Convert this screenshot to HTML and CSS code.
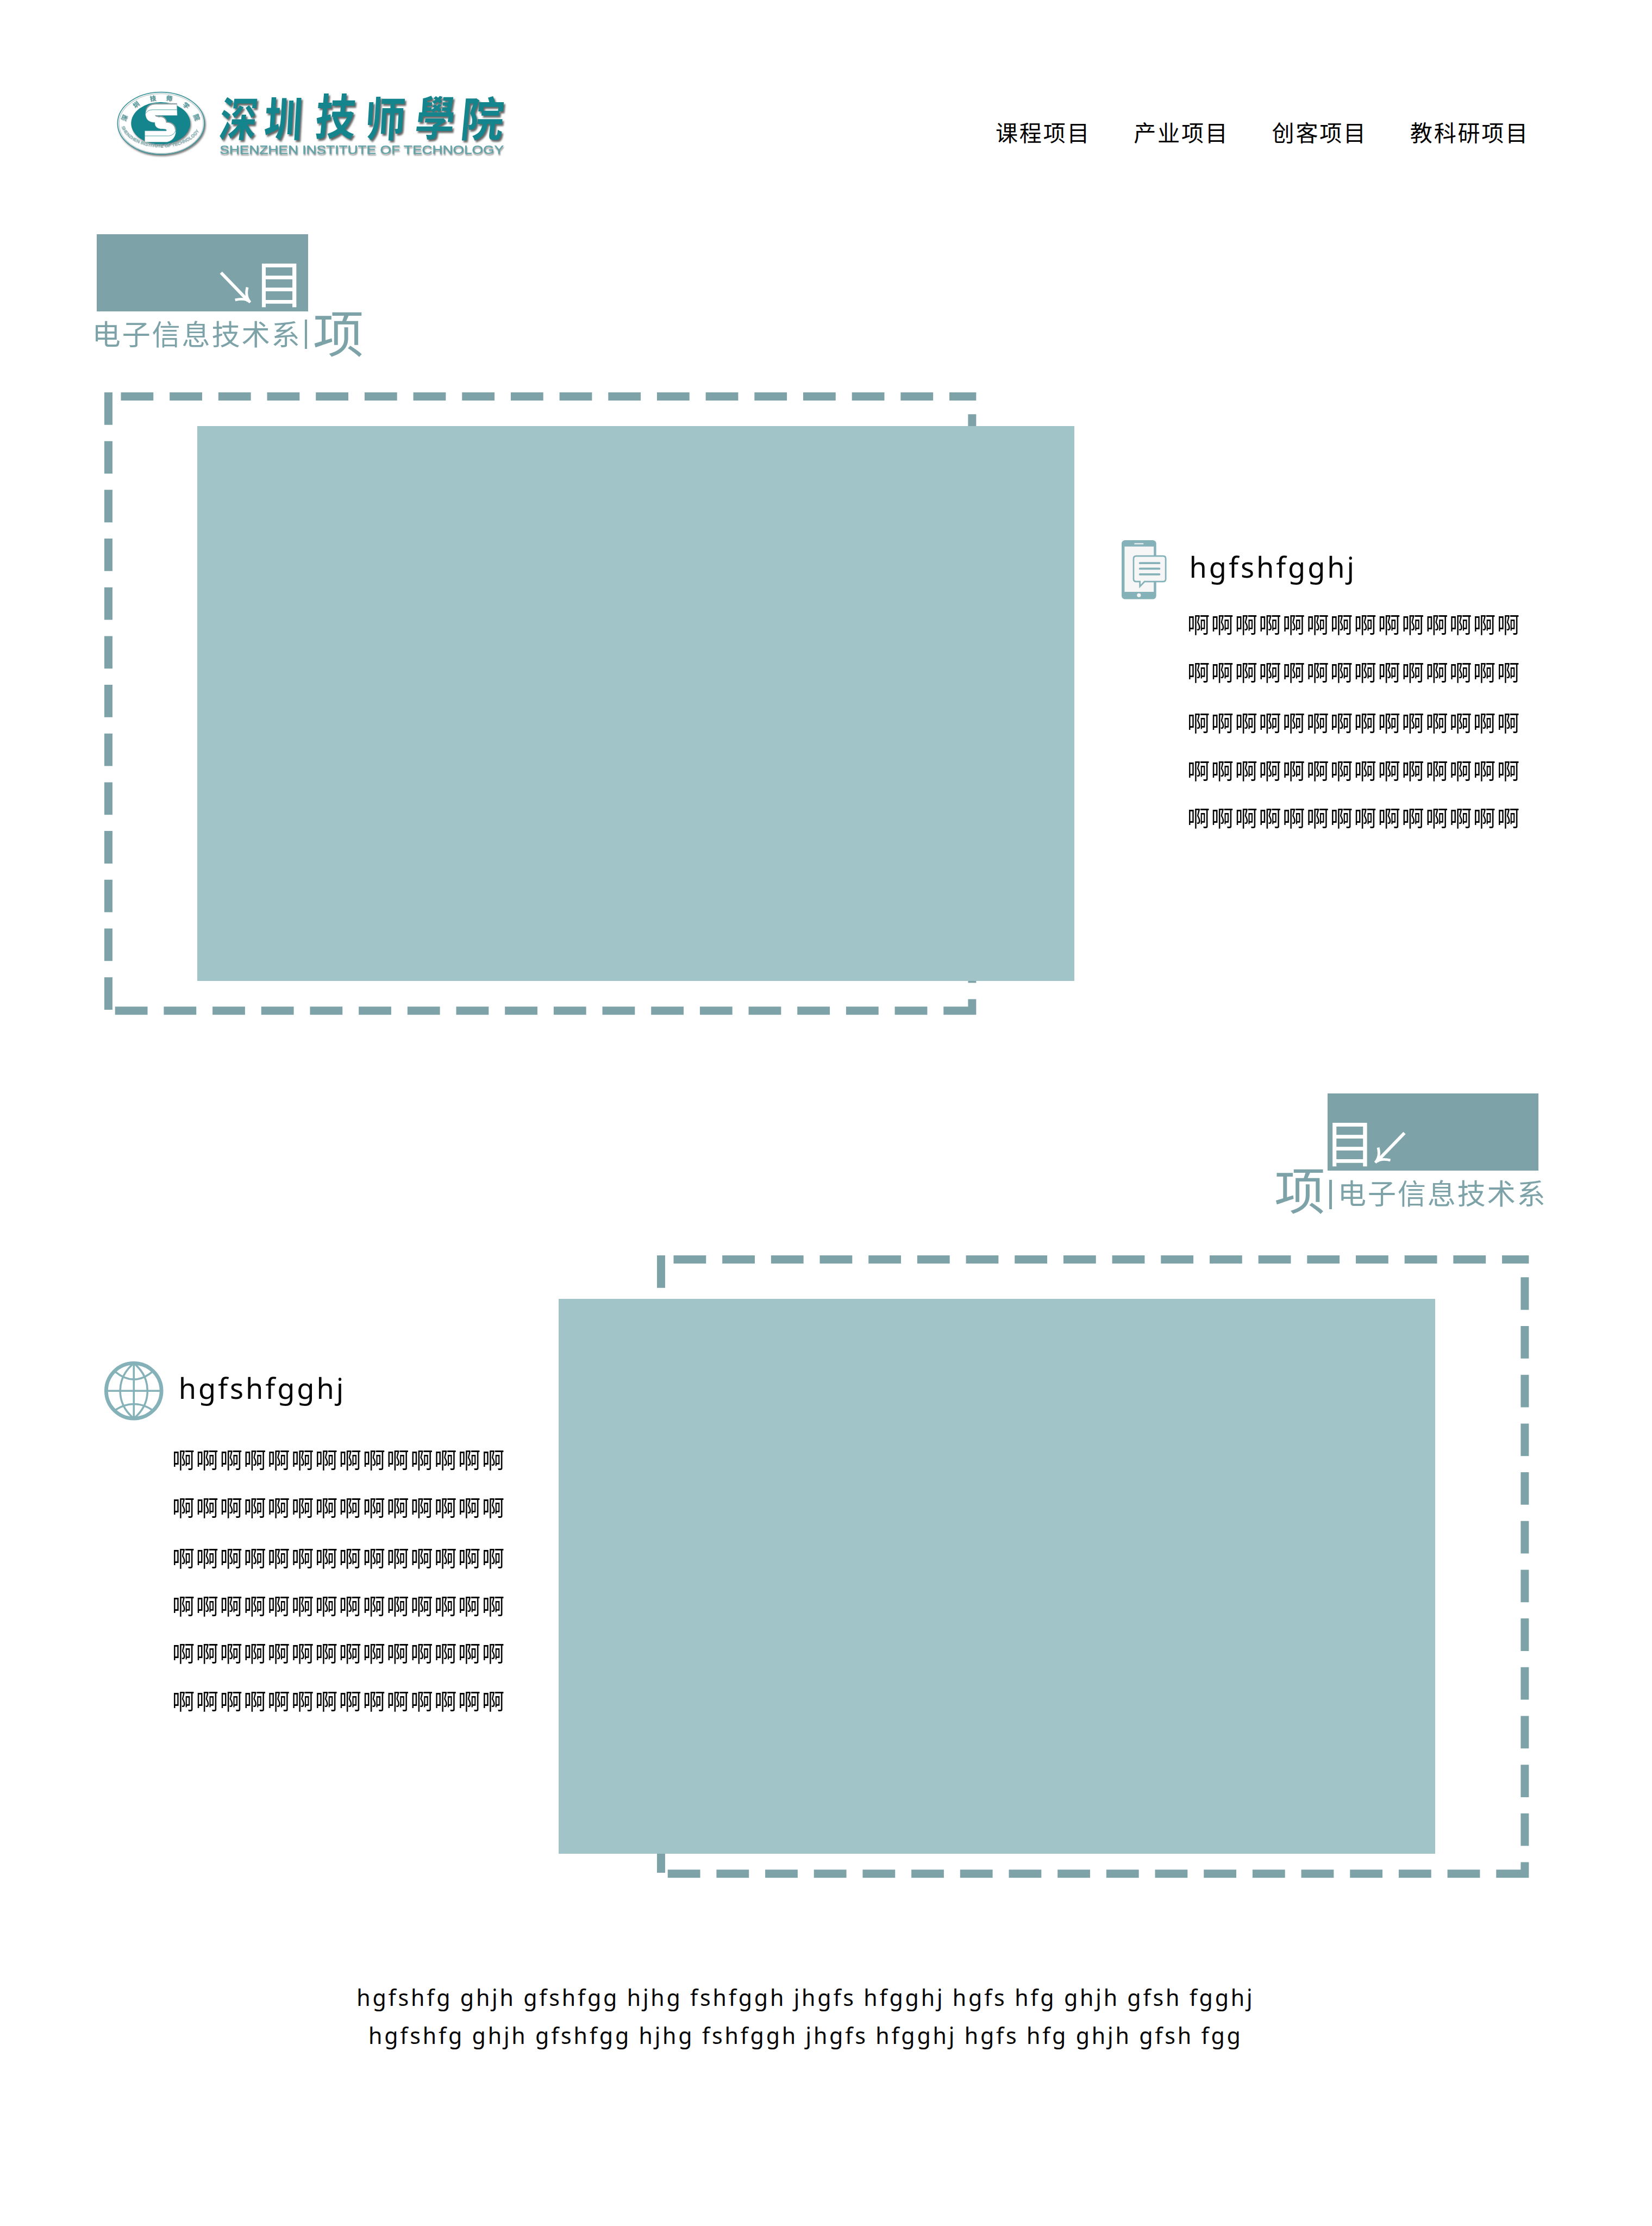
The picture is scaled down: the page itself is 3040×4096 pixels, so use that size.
FILE: index.html
```html
<!DOCTYPE html>
<html lang="zh-CN">
<head>
<meta charset="utf-8">
<title>深圳技师學院</title>
<link rel="stylesheet" href="styles.css">
</head>
<body>
<header class="top">
  <svg class="logo" viewBox="230 180 820 160">
    <g class="emblem" transform="translate(230 180) scale(.33333)">
      <g class="raised">
        <ellipse class="ring" cx="302" cy="220" rx="267" ry="191"/>
        <ellipse class="groove" cx="303" cy="222" rx="259" ry="184"/>
      </g>
      <g class="raised">
        <ellipse class="disc" cx="300" cy="220" rx="182" ry="130"/>
      </g>
      <path class="mark" d="M400 98H262C218 104 203 145 207 172C212 203 235 215 264 215C262 236 275 252 300 255C326 256 340 256 334 267H202V336H340C382 326 396 290 393 262C388 226 362 214 336 213C334 190 312 174 290 180L266 172H402Z"/>
      <path class="mark-shade" d="M210 140C218 112 240 102 268 101H398M392 262C388 226 362 214 336 213C334 190 312 174 290 180L268 174"/>
      <path class="mark-line" d="M207 160Q222 137 250 137H402M202 298H350Q384 294 393 262"/>
      <g class="ring-cn">
        <text transform="translate(75 185) rotate(-68)">深</text>
        <text transform="translate(147 102) rotate(-38)">圳</text>
        <text transform="translate(252 64) rotate(-10)">技</text>
        <text transform="translate(353 64) rotate(10)">师</text>
        <text transform="translate(458 108) rotate(38)">学</text>
        <text transform="translate(522 182) rotate(68)">院</text>
      </g>
      <path id="arc" fill="none" d="M58 240A248 154 0 0 0 545 246"/>
      <text class="ring-en"><textPath href="#arc" textLength="560" lengthAdjust="spacingAndGlyphs">SHENZHEN INSTITUTE OF TECHNOLOGY</textPath></text>
    </g>
    <g class="brush">
      <text transform="translate(486 280) scale(.8 1) skewX(-8)">深</text>
      <text transform="translate(580 280) scale(.82 1) skewX(-4)">圳</text>
      <text transform="translate(686 277) scale(.86 1.04) skewX(-6)">技</text>
      <text transform="translate(789 280) scale(.86 1) skewX(-4)">师</text>
      <text transform="translate(890 278) scale(.84 1) skewX(-8)">學</text>
      <text transform="translate(987 280) scale(.92 1) skewX(-6)">院</text>
    </g>
    <text class="latin" x="451" y="316" textLength="583" lengthAdjust="spacingAndGlyphs">SHENZHEN INSTITUTE OF TECHNOLOGY</text>
  </svg>
  <nav class="nav">
    <a>课程项目</a><a>产业项目</a><a>创客项目</a><a>教科研项目</a>
  </nav>
</header>

<section class="project">
  <div class="heading">
    <div class="plate">
      <svg class="arrow" viewBox="0 0 66 64"><path d="M3 3L59 61"/><path class="tip" d="M57 33Q52 52 63 64Q54 54 32 59"/></svg>
      <span class="big">目</span>
    </div>
    <div class="caption"><span class="dept">电子信息技术系</span><i class="bar"></i><span class="big">项</span></div>
  </div>
  <div class="row">
    <div class="stage">
      <svg class="dashes" viewBox="0 0 1789 1277">
        <path d="M34 8.33H1789M8.33 0V1277M1780.67 45V1277M22 1268.67H1789"/>
      </svg>
      <div class="picture"></div>
    </div>
    <div class="note">
      <svg class="phone" viewBox="0 0 92 121">
        <rect class="fill" width="71" height="121" rx="7"/>
        <rect class="paper" x="6" y="13" width="60" height="93"/>
        <rect class="paper" x="26" y="6" width="19" height="2.4" rx="1"/>
        <ellipse class="paper" cx="35.500" cy="113" rx="4" ry="4"/>
        <path class="bubble" d="M30 32.500H85Q90.500 32.500 90.500 38V79.500Q90.500 85 85 85H47L37.500 95V85H30Q24.500 85 24.500 79.500V38Q24.500 32.500 30 32.500Z"/>
        <path class="lines" d="M37.500 47H77.500M37.500 58.500H77.500M37.500 70H77.500"/>
      </svg>
      <div class="copy">
        <h2>hgfshfgghj</h2>
        <p>啊啊啊啊啊啊啊啊啊啊啊啊啊啊</p>
        <p>啊啊啊啊啊啊啊啊啊啊啊啊啊啊</p>
        <p>啊啊啊啊啊啊啊啊啊啊啊啊啊啊</p>
        <p>啊啊啊啊啊啊啊啊啊啊啊啊啊啊</p>
        <p>啊啊啊啊啊啊啊啊啊啊啊啊啊啊</p>
      </div>
    </div>
  </div>
</section>

<section class="project mirrored">
  <div class="heading">
    <div class="plate">
      <span class="big">目</span>
      <svg class="arrow" viewBox="0 0 66 64"><g transform="translate(66 0) scale(-1 1)"><path d="M3 3L59 61"/><path class="tip" d="M57 33Q52 52 63 64Q54 54 32 59"/></g></svg>
    </div>
    <div class="caption"><span class="big">项</span><i class="bar"></i><span class="dept">电子信息技术系</span></div>
  </div>
  <div class="row">
    <div class="note">
      <svg class="globe" viewBox="0 0 121 121">
        <circle class="rim" cx="60.500" cy="60.500" r="56.700"/>
        <path d="M60.500 4V117M4 60.500H117M58 6C24 36 24 85 58 115M63 6C97 36 97 85 63 115M22 21Q60.500 53 99 21M22 100Q60.500 75 99 100"/>
      </svg>
      <div class="copy">
        <h2>hgfshfgghj</h2>
        <p>啊啊啊啊啊啊啊啊啊啊啊啊啊啊</p>
        <p>啊啊啊啊啊啊啊啊啊啊啊啊啊啊</p>
        <p>啊啊啊啊啊啊啊啊啊啊啊啊啊啊</p>
        <p>啊啊啊啊啊啊啊啊啊啊啊啊啊啊</p>
        <p>啊啊啊啊啊啊啊啊啊啊啊啊啊啊</p>
        <p>啊啊啊啊啊啊啊啊啊啊啊啊啊啊</p>
      </div>
    </div>
    <div class="stage">
      <svg class="dashes" viewBox="0 0 1789 1277">
        <path d="M34 8.33H1789M8.33 0V1277M1780.67 45V1277M22 1268.67H1789"/>
      </svg>
      <div class="picture"></div>
    </div>
  </div>
</section>

<footer class="foot">
  <p>hgfshfg ghjh gfshfgg hjhg fshfggh jhgfs hfgghj hgfs hfg ghjh gfsh fgghj</p>
  <p>hgfshfg ghjh gfshfgg hjhg fshfggh jhgfs hfgghj hgfs hfg ghjh gfsh fgg</p>
</footer>
</body>
</html>
```
FILE: styles.css
```css
/* 1rem is a hundred design pixels */
html { font-size: 89.68px; background: #fff; }
* { box-sizing: border-box; margin: 0; padding: 0; }
body {
  width: 3040px;
  height: 4096px;
  overflow: hidden;
  color: #050505;
  font-family: "Noto Sans CJK SC", "Noto Sans", sans-serif;
  font-weight: 400;
}
svg { display: block; flex: none; overflow: visible; }

.top {
  display: flex;
  justify-content: space-between;
  align-items: flex-start;
  height: 4.81rem;
  padding: 1.8rem 2.52rem 0 2.3rem;
}
.logo { width: 8.2rem; height: 1.6rem; }
.ring { fill: #fff; stroke: #3f979c; stroke-width: 6; }
.groove { fill: none; stroke: #b9c6c7; stroke-width: 4; }
.disc { fill: #14858d; }
.raised { filter: drop-shadow(6px 9px 5px rgba(0, 0, 0, .5)); }
.mark { fill: #fff; stroke: #5d9a9e; stroke-width: 2; }
.mark-shade { fill: none; stroke: #8f9d9e; stroke-width: 7; }
.mark-line { fill: none; stroke: #3f979c; stroke-width: 3; }
.ring-cn text {
  font-size: 38px;
  font-weight: 700;
  fill: #4f9a9f;
  text-anchor: middle;
  dominant-baseline: central;
}
.ring-cn { filter: drop-shadow(3px 4px 2px rgba(0, 0, 0, .35)); }
.ring-en {
  font: 700 28px "Liberation Sans", sans-serif;
  fill: #8dbcc0;
  filter: drop-shadow(2px 3px 2px rgba(0, 0, 0, .35));
}
.brush { filter: drop-shadow(3px 4px 2px rgba(0, 0, 0, .6)); }
.brush text { font-size: 96px; font-weight: 700; fill: #14858d; text-anchor: middle; }
.latin {
  font: 400 25.500px "Liberation Sans", sans-serif;
  fill: #5fa3a8;
  stroke: #5fa3a8;
  stroke-width: .4;
  filter: drop-shadow(1px 3px 1px rgba(0, 0, 0, .45));
}

.nav { display: flex; gap: .88rem; padding-top: .61rem; }
.nav a { font-size: .4583rem; line-height: .6rem; letter-spacing: .0306rem; color: #000; }

.project { height: 16.01rem; }
.heading { height: 3.24rem; padding-left: 1.94rem; color: #7da3a9; }
.plate {
  display: flex;
  align-items: flex-end;
  justify-content: flex-end;
  width: 4.33rem;
  height: 1.58rem;
  margin-left: .05rem;
  padding: 0 .07rem .12rem 0;
  background: #7da3a9;
  color: #fff;
}
.big { font-size: 1.04rem; line-height: 1rem; }
.arrow { width: .66rem; height: .64rem; margin: 0 .05rem .07rem 0; fill: none; stroke: #fff; stroke-width: 6.5; }
.arrow .tip { stroke-width: 5.5; }
.caption { display: flex; height: 1rem; align-items: flex-start; }
.caption .big { margin-top: -.1rem; }
.dept {
  margin: .14rem 0 0 -.05rem;
  font-size: .5833rem;
  line-height: .6rem;
  letter-spacing: .03rem;
  white-space: nowrap;
}
.bar { width: .05rem; height: .6rem; margin: .17rem .12rem 0 .07rem; background: #7da3a9; }

.row { display: flex; align-items: flex-start; padding-left: 2.14rem; }
.stage { display: grid; flex: none; width: 19.9rem; height: 12.77rem; }
.stage > * { grid-area: 1 / 1; }
.dashes { width: 17.89rem; height: 12.77rem; fill: none; stroke: #7da3a9; stroke-width: 16.67; stroke-dasharray: 66.67 33.33; }
.picture { width: 17.99rem; height: 11.39rem; margin: .69rem 0 0 1.91rem; background: #a1c4c9; z-index: 1; }

.note { display: flex; padding: 3.03rem 0 0 .97rem; }
.phone { width: .92rem; height: 1.21rem; margin-right: .43rem; }
.phone .fill { fill: #84b2b8; }
.phone .paper { fill: #f6f6f6; }
.phone .bubble { fill: #f6f6f6; stroke: #84b2b8; stroke-width: 3; }
.phone .lines { stroke: #84b2b8; stroke-width: 4.2; stroke-linecap: round; }
.globe { width: 1.21rem; height: 1.21rem; margin-right: .19rem; fill: none; stroke: #84b2b8; stroke-width: 4; }
.globe .rim { stroke-width: 7.6; }

.copy { padding-top: .24rem; white-space: nowrap; will-change: transform; }
.copy h2 {
  margin: 0 0 .39rem .04rem;
  font: 400 .5833rem/.6rem "Noto Sans", sans-serif;
  letter-spacing: .044rem;
}
.copy p { font-size: .4583rem; line-height: .978rem; letter-spacing: .0306rem; }
.copy p:nth-of-type(3) { margin-top: .06rem; }

.mirrored { margin-top: 1.62rem; height: 16.09rem; }
.mirrored .heading { height: 3.32rem; padding-left: 26.15rem; }
.mirrored .plate { justify-content: flex-start; margin-left: 1.09rem; padding: 0 0 .12rem 0; }
.mirrored .plate .big { margin-left: -.06rem; }
.mirrored .arrow { margin: 0 0 .04rem -.03rem; }
.mirrored .caption .big { margin-top: -.15rem; }
.mirrored .bar { margin: .19rem .12rem 0 .09rem; }
.mirrored .dept { margin: .14rem 0 0; }
.mirrored .note { width: 9.32rem; padding: 2.17rem 0 0 0; }
.mirrored .picture { margin: .89rem 0 0 0; }
.mirrored .dashes { margin-left: 2.02rem; }
.mirrored .copy h2 { margin: 0 0 .68rem .13rem; }

.foot {
  margin-top: 2.07rem;
  padding-right: .84rem;
  text-align: center;
  font: 400 .4583rem/.777rem "Noto Sans", sans-serif;
  letter-spacing: .0426rem;
  white-space: nowrap;
}
```
